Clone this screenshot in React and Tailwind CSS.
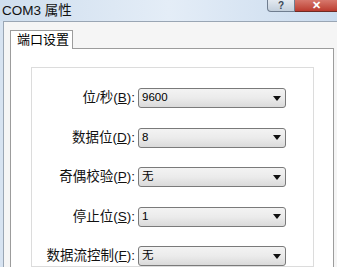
const rows = [
  { label: "位/秒", key: "B", value: "9600" },
  { label: "数据位", key: "D", value: "8" },
  { label: "奇偶校验", key: "P", value: "无" },
  { label: "停止位", key: "S", value: "1" },
  { label: "数据流控制", key: "F", value: "无" },
];

const font = "font-['Liberation_Sans','Noto_Sans_CJK_SC',sans-serif]";

function Combo({ value }) {
  return (
    <div className="w-[148px] h-[20px] flex items-center rounded-[3px] border border-[#7a7a7a] bg-gradient-to-b from-[#f3f3f3] via-[#ebebeb] to-[#dadada] pl-[3px] pr-[4px]">
      <span className="flex-1 text-[11.5px] leading-none text-black">{value}</span>
      <svg width="8" height="5" viewBox="0 0 8 5" className="shrink-0">
        <path d="M0 0h8L4 5z" fill="#111" />
      </svg>
    </div>
  );
}

export default function App() {
  return (
    <div className={`w-[337px] h-[267px] overflow-hidden flex flex-col bg-[#d7e3f1] ${font}`}>
      {/* Title bar */}
      <div className="h-[21px] shrink-0 flex items-start bg-gradient-to-r from-[#cfdeee] via-[#e4edf7] to-[#cadbee]">
        <span className="pl-[2px] pt-[2px] text-[13.5px] leading-[17px] text-[#111]">COM3 属性</span>
        <div className="ml-auto flex">
          <div className="w-[28px] h-[12px] flex items-center justify-center border border-t-0 border-[#6f7d8f] rounded-bl-[4px] bg-gradient-to-b from-[#e3e9f0] to-[#c3cfdc] text-[10px] leading-none font-bold text-[#3a4656]">
            ?
          </div>
          <div className="w-[42px] h-[12px] flex items-center justify-center border-b border-[#6f2a24] bg-gradient-to-b from-[#d6776c] to-[#bb3b2f] text-[11px] leading-none font-bold text-white">
            ✕
          </div>
        </div>
      </div>

      {/* Client area */}
      <div className="flex-1 ml-[3px] border-l border-t border-[#9aa6b4] bg-[#f5f5f5] pt-[8px] pl-[6px] pr-[3px] flex flex-col">
        <div className="w-[63px] h-[19px] shrink-0 border border-b-0 border-[#9c9c9c] bg-white relative z-10 -mb-px text-[13px] leading-[18px] pl-[6px] text-black">
          端口设置
        </div>
        <div className="flex-1 border border-[#9c9c9c] bg-white pt-[18px] pl-[20px] pr-[19px] flex flex-col">
          <div className="flex-1 border border-[#dcdcdc] pt-[20px] flex flex-col gap-[19.5px]">
            {rows.map((r) => (
              <div key={r.label} className="flex items-center h-[20px]">
                <div className="w-[106px] text-right pr-[3px] text-[13.5px] leading-none text-[#111] whitespace-nowrap">
                  {r.label}(<span className="underline">{r.key}</span>):
                </div>
                <Combo value={r.value} />
              </div>
            ))}
          </div>
        </div>
      </div>
    </div>
  );
}
